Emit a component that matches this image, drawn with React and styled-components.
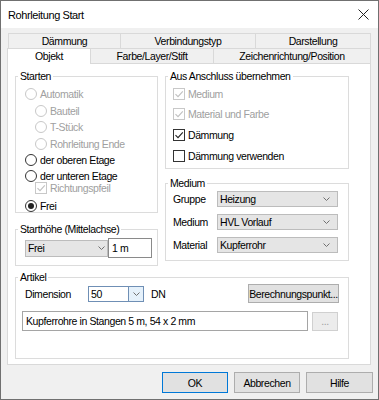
import React from "react";
import styled, { createGlobalStyle } from "styled-components";

const GlobalStyle = createGlobalStyle`
  html, body { margin: 0; padding: 0; background: #fff; }
  body {
    font-family: "Liberation Sans", Arial, sans-serif;
    font-size: 10.5px;
    letter-spacing: -0.4px;
    color: #000;
  }
  * { box-sizing: border-box; }
`;

const Window = styled.div`
  width: 379px;
  height: 400px;
  border: 1px solid #707070;
  background: #f0f0f0;
  display: flex;
  flex-direction: column;
`;

const TitleBar = styled.div`
  height: 27px;
  flex: none;
  background: #fff;
  display: flex;
  align-items: center;
  justify-content: space-between;
  padding: 0 9px 0 7px;
  font-size: 11px;
`;

const Body = styled.div`
  flex: 1;
  display: flex;
  flex-direction: column;
  padding: 5px 7px 0 6px;
`;

const TabRow = styled.div`
  display: flex;
  height: 15px;
  padding-left: ${(p) => p.$indent || 0}px;
`;

const Tab = styled.div`
  flex: none;
  width: ${(p) => p.$w}px;
  height: ${(p) => (p.$active ? 16 : 15)}px;
  border-top: 1px solid #d9d9d9;
  border-left: 1px solid #d9d9d9;
  background: ${(p) => (p.$active ? "#fff" : "#f0f0f0")};
  text-align: center;
  line-height: 14px;
  position: relative;
  z-index: ${(p) => (p.$active ? 1 : 0)};
  &:last-child { border-right: 1px solid #d9d9d9; }
`;

const Panel = styled.div`
  height: 302px;
  flex: none;
  background: #fff;
  border: 1px solid #d9d9d9;
  padding: 12px 21px 0 7px;
`;

const Columns = styled.div`
  display: grid;
  grid-template-columns: 143px 184px;
  column-gap: 7px;
  align-items: start;
`;

const Column = styled.div`
  display: flex;
  flex-direction: column;
`;

const Group = styled.div`
  border: 1px solid #dcdcdc;
  height: ${(p) => p.$h}px;
  margin-top: ${(p) => p.$mt || 0}px;
  display: flex;
  flex-direction: column;
`;

const Caption = styled.div`
  align-self: flex-start;
  margin: -7px 0 0 2px;
  padding: 0 2px;
  background: #fff;
  line-height: 12px;
  height: 12px;
`;

const List = styled.div`
  display: flex;
  flex-direction: column;
  padding: ${(p) => p.$pt || 0}px 0 0 ${(p) => p.$pl || 0}px;
`;

const Option = styled.div`
  display: flex;
  align-items: center;
  height: 12px;
  margin-top: ${(p) => p.$mt || 0}px;
  padding-left: ${(p) => p.$indent || 0}px;
  color: ${(p) => (p.$disabled ? "#a0a0a0" : "#000")};
  white-space: nowrap;
`;

const RadioMark = styled.span`
  flex: none;
  width: 12px;
  height: 12px;
  margin-right: 3px;
  border-radius: 50%;
  border: 1px solid ${(p) => (p.$disabled ? "#c8c8c8" : "#333")};
  background: #fff;
  display: flex;
  align-items: center;
  justify-content: center;
  &::after {
    content: "";
    display: ${(p) => (p.$checked ? "block" : "none")};
    width: 6px;
    height: 6px;
    border-radius: 50%;
    background: #222;
  }
`;

const CheckMark = styled.span`
  flex: none;
  width: 12px;
  height: 12px;
  margin-right: 3px;
  border: 1px solid ${(p) => (p.$disabled ? "#c8c8c8" : "#333")};
  background: #fff;
  display: flex;
  align-items: center;
  justify-content: center;
`;

const Radio = ({ label, checked, disabled, mt, indent }) => (
  <Option $mt={mt} $indent={indent} $disabled={disabled}>
    <RadioMark $checked={checked} $disabled={disabled} />
    {label}
  </Option>
);

const Check = ({ label, checked, disabled, mt, indent }) => (
  <Option $mt={mt} $indent={indent} $disabled={disabled}>
    <CheckMark $disabled={disabled}>
      {checked && (
        <svg width="10" height="10" viewBox="0 0 10 10">
          <path
            d="M1.5 5.2 L4 7.7 L8.8 2.4"
            fill="none"
            stroke={disabled ? "#c0c0c0" : "#222"}
            strokeWidth="1.1"
          />
        </svg>
      )}
    </CheckMark>
    {label}
  </Option>
);

const Chevron = () => (
  <svg width="7" height="4" viewBox="0 0 7 4">
    <path d="M0.5 0.5 L3.5 3.5 L6.5 0.5" fill="none" stroke="#707070" strokeWidth="1" />
  </svg>
);

const SelectBox = styled.div`
  flex: none;
  width: ${(p) => p.$w}px;
  height: ${(p) => p.$h || 16}px;
  background: #e5e5e5;
  border: 1px solid #bcbcbc;
  display: flex;
  align-items: center;
  justify-content: space-between;
  padding: 0 ${(p) => p.$pr || 7}px 0 2px;
`;

const Select = ({ value, w, h, pr }) => (
  <SelectBox $w={w} $h={h} $pr={pr}>
    <span>{value}</span>
    <Chevron />
  </SelectBox>
);

const Field = styled.div`
  flex: ${(p) => (p.$grow ? 1 : "none")};
  width: ${(p) => (p.$w ? `${p.$w}px` : "auto")};
  height: ${(p) => p.$h || 20}px;
  background: #fff;
  border: 1px solid ${(p) => p.$border || "#8a8a8a"};
  display: flex;
  align-items: center;
  padding-left: 3px;
  white-space: nowrap;
`;

const FieldRow = styled.div`
  display: flex;
  align-items: center;
  height: ${(p) => p.$h}px;
  margin-top: ${(p) => p.$mt || 0}px;
  padding: 0 ${(p) => p.$pr || 0}px 0 ${(p) => p.$pl || 0}px;
  gap: ${(p) => p.$gap || 0}px;
`;

const Label = styled.span`
  flex: none;
  width: ${(p) => (p.$w ? `${p.$w}px` : "auto")};
  margin-left: ${(p) => p.$ml || 0}px;
`;

const Combo = styled.div`
  flex: none;
  width: 56px;
  height: 16px;
  border: 1px solid #6f8fb5;
  background: #fff;
  display: flex;
`;

const ComboText = styled.div`
  flex: 1;
  padding-left: 2px;
  line-height: 14px;
`;

const ComboButton = styled.div`
  flex: none;
  width: 15px;
  background: #e5f1fb;
  border-left: 1px solid #6f8fb5;
  display: flex;
  align-items: center;
  justify-content: center;
`;

const Button = styled.div`
  flex: none;
  width: ${(p) => p.$w}px;
  height: ${(p) => p.$h || 21}px;
  margin-left: ${(p) => (p.$push ? "auto" : "0")};
  background: ${(p) => (p.$disabled ? "#ececec" : "#e1e1e1")};
  border: 1px solid
    ${(p) => (p.$default ? "#0078d7" : p.$disabled ? "#d0d0d0" : "#adadad")};
  color: ${(p) => (p.$disabled ? "#a0a0a0" : "#000")};
  display: flex;
  align-items: center;
  justify-content: center;
  white-space: nowrap;
`;

const ButtonRow = styled.div`
  display: flex;
  justify-content: flex-end;
  gap: 6px;
  margin: 7px -2px 0 0;
`;

export default function App() {
  return (
    <>
      <GlobalStyle />
      <Window>
        <TitleBar>
          <span>Rohrleitung Start</span>
          <svg width="11" height="11" viewBox="0 0 11 11">
            <path d="M0.5 0.5 L10.5 10.5 M10.5 0.5 L0.5 10.5" stroke="#222" strokeWidth="1" />
          </svg>
        </TitleBar>
        <Body>
          <TabRow $indent={1}>
            <Tab $w={112}>Dämmung</Tab>
            <Tab $w={135}>Verbindungstyp</Tab>
            <Tab $w={116}>Darstellung</Tab>
          </TabRow>
          <TabRow>
            <Tab $w={83} $active>Objekt</Tab>
            <Tab $w={123}>Farbe/Layer/Stift</Tab>
            <Tab $w={158}>Zeichenrichtung/Position</Tab>
          </TabRow>
          <Panel>
            <Columns>
              <Column>
                <Group $h={137}>
                  <Caption>Starten</Caption>
                  <List $pt={6} $pl={9}>
                    <Radio label="Automatik" disabled />
                    <Radio label="Bauteil" disabled indent={10} mt={5} />
                    <Radio label="T-Stück" disabled indent={10} mt={4} />
                    <Radio label="Rohrleitung Ende" disabled indent={10} mt={5} />
                    <Radio label="der oberen Etage" mt={4} />
                    <Radio label="der unteren Etage" mt={4} />
                    <Check label="Richtungspfeil" checked disabled indent={10} mt={0} />
                    <Radio label="Frei" checked mt={6} />
                  </List>
                </Group>
                <Group $h={37} $mt={16}>
                  <Caption>Starthöhe (Mittelachse)</Caption>
                  <FieldRow $h={20} $mt={3} $pl={9}>
                    <Select value="Frei" w={83} h={17} pr={2} />
                    <Field $w={44} $h={20}>1 m</Field>
                  </FieldRow>
                </Group>
              </Column>
              <Column>
                <Group $h={93}>
                  <Caption>Aus Anschluss übernehmen</Caption>
                  <List $pt={6} $pl={7}>
                    <Check label="Medium" checked disabled />
                    <Check label="Material und Farbe" checked disabled mt={8} />
                    <Check label="Dämmung" checked mt={9} />
                    <Check label="Dämmung verwenden" mt={9} />
                  </List>
                </Group>
                <Group $h={78} $mt={14}>
                  <Caption>Medium</Caption>
                  <List $pt={2} $pl={7}>
                    <FieldRow $h={16}>
                      <Label $w={44}>Gruppe</Label>
                      <Select value="Heizung" w={121} />
                    </FieldRow>
                    <FieldRow $h={16} $mt={7}>
                      <Label $w={44}>Medium</Label>
                      <Select value="HVL Vorlauf" w={121} />
                    </FieldRow>
                    <FieldRow $h={16} $mt={7}>
                      <Label $w={44}>Material</Label>
                      <Select value="Kupferrohr" w={121} />
                    </FieldRow>
                  </List>
                </Group>
              </Column>
            </Columns>
            <Group $h={82} $mt={11}>
              <Caption>Artikel</Caption>
              <FieldRow $h={19} $mt={1} $pl={9} $pr={9}>
                <Label $w={63}>Dimension</Label>
                <Combo>
                  <ComboText>50</ComboText>
                  <ComboButton>
                    <Chevron />
                  </ComboButton>
                </Combo>
                <Label $ml={7}>DN</Label>
                <Button $w={91} $h={19} $push>
                  Berechnungspunkt...
                </Button>
              </FieldRow>
              <FieldRow $h={20} $mt={8} $pl={6} $pr={10} $gap={4}>
                <Field $grow $h={20} $border="#a5a5a5">
                  Kupferrohre in Stangen 5 m, 54 x 2 mm
                </Field>
                <Button $w={26} $h={19} $disabled>
                  ...
                </Button>
              </FieldRow>
            </Group>
          </Panel>
          <ButtonRow>
            <Button $w={66} $default>OK</Button>
            <Button $w={66}>Abbrechen</Button>
            <Button $w={67}>Hilfe</Button>
          </ButtonRow>
        </Body>
      </Window>
    </>
  );
}
